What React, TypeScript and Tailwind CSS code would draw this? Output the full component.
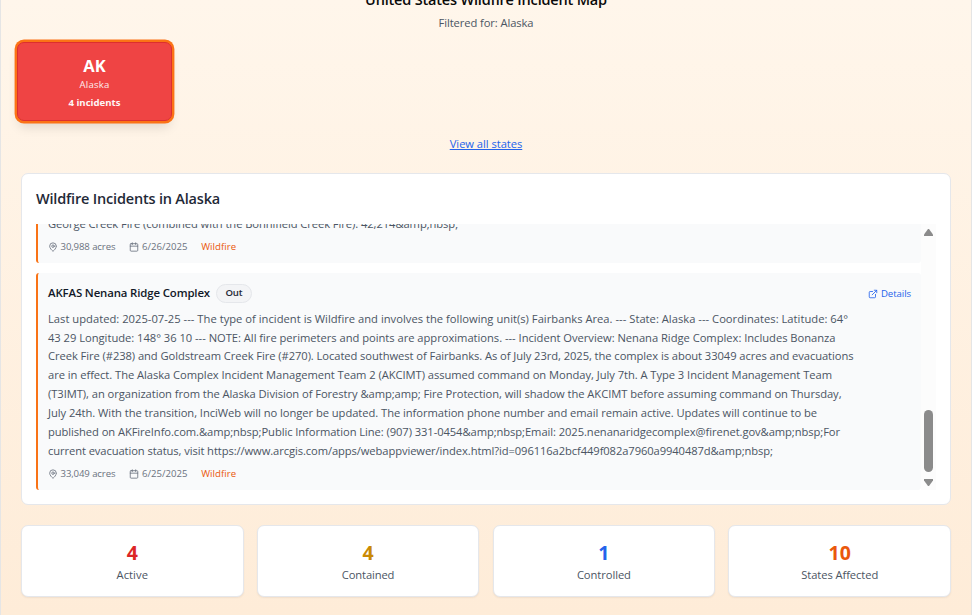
import { Calendar, ExternalLink, MapPin } from 'lucide-react';

const description = [
  { text: 'Last updated: 2025-07-25 --- The type of incident is Wildfire and involves the following unit(s) Fairbanks Area. --- State: Alaska --- Coordinates: Latitude: 64°', tracking: 'tracking-[0.013px]' },
  { text: '43 29 Longitude: 148° 36 10 --- NOTE: All fire perimeters and points are approximations. --- Incident Overview: Nenana Ridge Complex: Includes Bonanza', tracking: 'tracking-[-0.028px]' },
  { text: 'Creek Fire (#238) and Goldstream Creek Fire (#270). Located southwest of Fairbanks. As of July 23rd, 2025, the complex is about 33049 acres and evacuations', tracking: 'tracking-[-0.075px]' },
  { text: 'are in effect. The Alaska Complex Incident Management Team 2 (AKCIMT) assumed command on Monday, July 7th. A Type 3 Incident Management Team', tracking: 'tracking-[-0.054px]' },
  { text: '(T3IMT), an organization from the Alaska Division of Forestry &amp;amp; Fire Protection, will shadow the AKCIMT before assuming command on Thursday,', tracking: 'tracking-[-0.063px]' },
  { text: 'July 24th. With the transition, InciWeb will no longer be updated. The information phone number and email remain active. Updates will continue to be', tracking: 'tracking-[-0.055px]' },
  { text: 'published on AKFireInfo.com.&amp;nbsp;Public Information Line: (907) 331-0454&amp;nbsp;Email: 2025.nenanaridgecomplex@firenet.gov&amp;nbsp;For', tracking: 'tracking-[-0.078px]' },
  { text: 'current evacuation status, visit https://www.arcgis.com/apps/webappviewer/index.html?id=096116a2bcf449f082a7960a9940487d&amp;nbsp;', tracking: 'tracking-[-0.094px]' },
];

const stats = [
  { value: '4', label: 'Active', color: 'text-[#dc2626]', tracking: 'tracking-[0.06px]' },
  { value: '4', label: 'Contained', color: 'text-[#ca8a04]', tracking: 'tracking-[-0.128px]' },
  { value: '1', label: 'Controlled', color: 'text-[#2563eb]', tracking: 'tracking-[-0.07px]' },
  { value: '10', label: 'States Affected', color: 'text-[#ea580c]', tracking: 'tracking-[-0.081px]' },
];

function Meta({ acres, date }: { acres: string; date: string }) {
  return (
    <div className="flex h-[14px] items-center gap-[13.6px] text-[9.6px] leading-[14px] text-[#6b7280]">
      <span className="flex items-center gap-[2.5px] tracking-[-0.11px]">
        <MapPin size={10} strokeWidth={2} />
        {acres}
      </span>
      <span className="flex items-center gap-[3px] tracking-[0.02px]">
        <Calendar size={10} strokeWidth={2} />
        {date}
      </span>
      <span className="tracking-[0.06px] text-[#ea580c]">Wildfire</span>
    </div>
  );
}

export default function App() {
  return (
    <div className="h-[615px] w-full overflow-hidden bg-white font-['Open_Sans','Noto_Sans',sans-serif]">
      <main className="h-full w-[972px] overflow-hidden border-x border-[#e5e5e5] bg-linear-to-b from-[#fff6eb] to-[#feecd8] px-5">
        <header className="-mt-[11px] text-center">
          <h1 className="h-[22px] text-[14.5px] leading-[22px] font-semibold tracking-[-0.18px] text-[#0a0a0a]">United States Wildfire Incident Map</h1>
          <p className="mt-[2px] h-5 text-[11.2px] leading-5 tracking-[-0.087px] text-[#4b5563]">Filtered for: Alaska</p>
        </header>

        <section className="-ml-[4px] mt-[9px] grid grid-cols-6">
          <button className="flex h-[79px] w-[155px] flex-col items-center rounded-[7px] border-[1.5px] border-[#dc2f2f] bg-[#ef4444] pt-[12px] text-white shadow-[0_0_0_2.4px_#fb7316,0_8px_12px_-2px_rgba(0,0,0,0.12)]">
            <span className="text-[16.5px] leading-[21px] font-bold">AK</span>
            <span className="mt-[1px] text-[9.6px] leading-[15px] tracking-[0.18px] opacity-90">Alaska</span>
            <span className="mt-[3px] text-[9.6px] leading-[15px] font-bold opacity-95">4 incidents</span>
          </button>
        </section>

        <div className="mt-[13px] flex h-5 justify-center">
          <a className="text-[11.2px] leading-5 tracking-[-0.05px] text-[#2563eb] underline">View all states</a>
        </div>

        <section className="mt-[19px] h-[332px] rounded-[7px] border border-[#e5e7eb] bg-white px-[14px] pt-[14px]">
          <h2 className="h-[22px] text-[14.5px] leading-[22px] font-semibold tracking-[-0.19px] text-[#1f2937]">Wildfire Incidents in Alaska</h2>
          <div className="mt-[14px] flex h-[266px] w-[900px] overflow-hidden">
            <div className="flex w-[885px] flex-col gap-[10px]">
              <article className="flex h-[39px] flex-col justify-end rounded-b-[3px] border-l-2 border-[#f97316] bg-[#f9fafb] pb-[9px] pl-[10px]">
                <p className="mb-[7px] h-[19px] text-[11.2px] leading-[19px] tracking-[-0.073px] whitespace-pre text-[#4b5563]">{'George Creek Fire (combined with the Bonnifield Creek Fire): 42,214&amp;nbsp;'}</p>
                <Meta acres="30,988 acres" date="6/26/2025" />
              </article>
              <article className="h-[217px] rounded-[3px] border-l-2 border-[#f97316] bg-[#f9fafb] pt-[10px] pr-[10px] pl-[10px]">
                <div className="flex h-[20px] items-center">
                  <h3 className="text-[11.4px] font-semibold tracking-[-0.126px] text-[#111827]">AKFAS Nenana Ridge Complex</h3>
                  <span className="ml-[6px] flex h-[19px] w-[36px] items-center justify-center rounded-full border border-[#e5e7eb] bg-[#f3f4f6] text-[9.6px] font-semibold tracking-[-0.1px] text-[#1f2937]">Out</span>
                  <a className="mt-[2px] ml-auto flex items-center gap-[3px] text-[9.6px] tracking-[-0.07px] text-[#2563eb]">
                    <ExternalLink size={10} />
                    Details
                  </a>
                </div>
                <div className="mt-[6.6px] mb-[6.2px] text-[11.2px] leading-[18.9px] text-[#4b5563]">
                  {description.map((line) => (
                    <p key={line.text} className={`${line.tracking} whitespace-pre`}>{line.text}</p>
                  ))}
                </div>
                <Meta acres="33,049 acres" date="6/25/2025" />
              </article>
            </div>
            <div className="flex w-[15px] flex-col items-center bg-[#fcfcfc] pt-[5px]">
              <svg width="9" height="7" viewBox="0 0 9 7" fill="#8b8b8b"><path d="M4 0h1l4 5.5V7H0V5.5z" /></svg>
              <div className="mt-[174px] h-[62px] w-[9px] rounded-full bg-[#8b8b8b]" />
              <svg className="mt-[7px]" width="9" height="7" viewBox="0 0 9 7" fill="#8b8b8b"><path d="M0 0h9v1.5L5 7H4L0 1.5z" /></svg>
            </div>
          </div>
        </section>

        <section className="mt-5 grid grid-cols-4 gap-[13.33px]">
          {stats.map((s) => (
            <div key={s.label} className="flex h-[72px] flex-col items-center rounded-[7px] border border-[#e5e7eb] bg-white pt-[13px] shadow-[0_1px_2px_rgba(0,0,0,0.06)]">
              <span className={`${s.color} text-[19.5px] leading-[27px] font-bold`}>{s.value}</span>
              <span className={`${s.tracking} text-[11.2px] leading-[17px] text-[#4b5563]`}>{s.label}</span>
            </div>
          ))}
        </section>
      </main>
    </div>
  );
}
